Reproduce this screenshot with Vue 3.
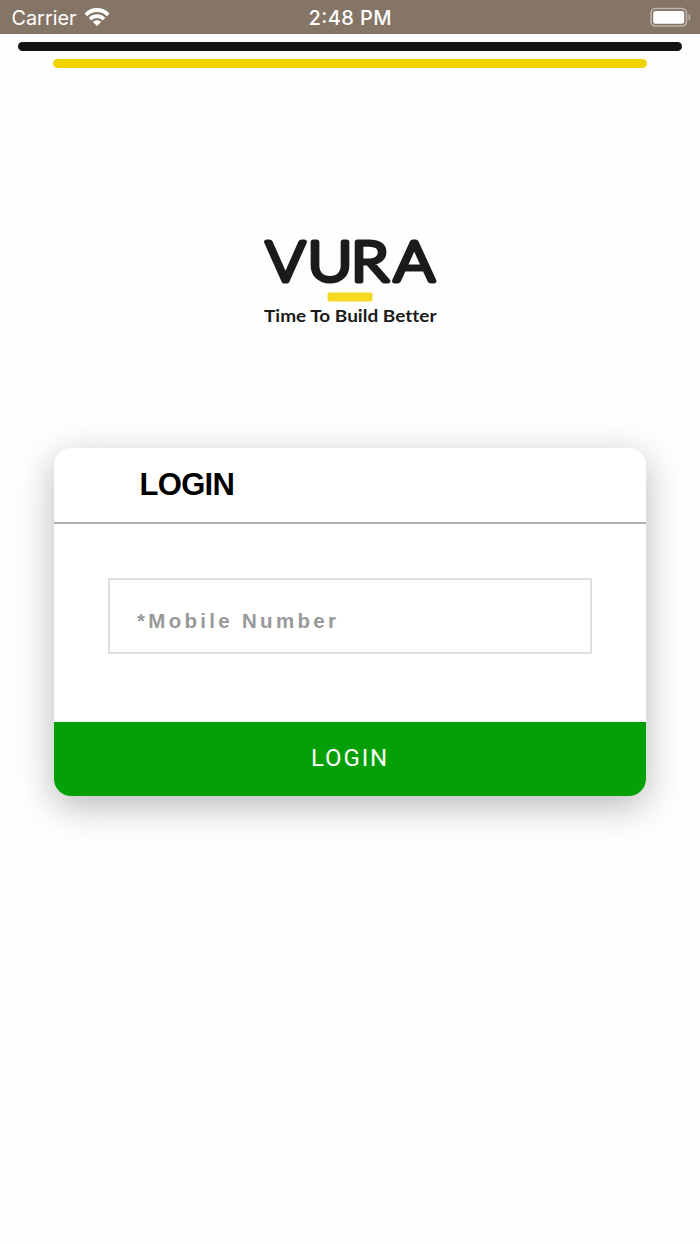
<script setup>
import { ref } from 'vue';

const mobile = ref('');
</script>

<template>
  <div class="screen">
    <header class="status-bar">
      <div class="carrier">
        <svg class="carrier-name" width="66" height="26" viewBox="0 0 66 26">
          <text x="-0.5" y="20.5" textLength="65" lengthAdjust="spacingAndGlyphs">Carrier</text>
        </svg>
        <svg class="wifi" width="26" height="20" viewBox="0 0 26 20">
          <path d="M0.5 6.5C7.5-.8 18.5-.8 25.5 6.5L22.8 9.2C17.4 3.7 8.6 3.7 3.2 9.2Z" />
          <path d="M4.7 10.7C9.3 6.1 16.7 6.1 21.3 10.7L18.6 13.4C15.5 10.3 10.5 10.3 7.4 13.4Z" />
          <path d="M8.9 14.9C11.2 12.7 14.8 12.7 17.1 14.9L13 19Z" />
        </svg>
      </div>
      <svg class="time" width="84" height="26" viewBox="0 0 84 26">
        <text x="0.5" y="20.5" textLength="83" lengthAdjust="spacing">2:48 PM</text>
      </svg>
      <svg class="battery" width="42" height="20" viewBox="0 0 42 20">
        <rect x="1" y="1.5" width="35.5" height="17.500" rx="4.5" fill="none" stroke="#bdb4ac" stroke-width="1.6" />
        <rect x="3.2" y="3.9" width="31" height="12.8" rx="2.2" fill="#fff" />
        <path d="M38.5 7C41 8 41 12.500 38.5 13.500Z" fill="#bdb4ac" />
      </svg>
    </header>

    <div class="line black"></div>
    <div class="line yellow"></div>

    <!-- logo -->
    <svg class="logo" width="180" height="96" viewBox="0 0 180 96">
      <g class="brand">
        <text x="6" y="45.8" textLength="39" lengthAdjust="spacingAndGlyphs">V</text>
        <text x="47.5" y="45.8" textLength="45" lengthAdjust="spacingAndGlyphs">U</text>
        <text x="91" y="45.8" textLength="37.5" lengthAdjust="spacingAndGlyphs">R</text>
        <text x="134" y="45.8" textLength="40.5" lengthAdjust="spacingAndGlyphs">A</text>
      </g>
      <rect x="67.5" y="57.5" width="45" height="9" rx="2" fill="#f5da22" />
      <text class="tagline" x="4" y="87.3" textLength="172.5" lengthAdjust="spacingAndGlyphs">Time To Build Better</text>
    </svg>

    <form class="card" @submit.prevent>
      <h1 class="title">LOGIN</h1>
      <div class="body">
        <input v-model="mobile" class="field" type="tel" placeholder="*Mobile Number" />
      </div>
      <button class="submit" type="submit">LOGIN</button>
    </form>
  </div>
</template>

<style>
body {
  background: #fff;
}
</style>

<style scoped>
.screen {
  display: flex;
  flex-direction: column;
  align-items: center;
  width: 700px;
  height: 1244px;
  overflow: hidden;
  background: #fefefe;
  font-family: "Liberation Sans", Arial, sans-serif;
}

svg {
  overflow: visible;
}

.status-bar {
  display: grid;
  grid-template-columns: 1fr 84px 1fr;
  align-items: center;
  box-sizing: border-box;
  width: 100%;
  height: 34px;
  padding: 0 8px 0 12px;
  background: #857567;
  font-family: Inter, sans-serif;
  font-size: 20px;
  fill: #fff;
}
.carrier {
  display: flex;
  align-items: center;
  gap: 6px;
}
.wifi {
  margin-top: -1px;
}
.time {
  margin-left: -2px;
  font-weight: 500;
}
.battery {
  justify-self: end;
}

.line {
  flex: none;
  height: 9px;
  border-radius: 5px;
}
.black {
  width: 664px;
  margin-top: 8px;
  background: #111413;
}
.yellow {
  width: 594px;
  margin-top: 8px;
  background: #f2d302;
}

.logo {
  flex: none;
  margin-top: 167px;
}
.brand {
  font-family: Lato, sans-serif;
  font-size: 56px;
  font-weight: 300;
  fill: #1b1b19;
  stroke: #1b1b19;
  stroke-width: 5;
  stroke-linejoin: round;
}
.tagline {
  font-family: Lato, sans-serif;
  font-size: 17px;
  font-weight: 700;
  font-variant-ligatures: none;
  fill: #1b1b19;
}

.card {
  display: flex;
  flex-direction: column;
  width: 592px;
  height: 348px;
  margin-top: 117px;
  overflow: hidden;
  border-radius: 17px;
  background: #fff;
  box-shadow: 0 10px 37px rgba(0, 0, 0, 0.28);
}
.title {
  box-sizing: border-box;
  height: 76px;
  margin: 0;
  padding-left: 85.5px;
  border-bottom: 2px solid #b0b0b0;
  font-size: 31px;
  line-height: 74px;
  letter-spacing: -0.7px;
  color: #000;
}
.body {
  flex: 1;
  padding: 54px 54px 0;
}
.field {
  display: block;
  box-sizing: border-box;
  width: 484px;
  height: 76px;
  padding: 10px 27px 0;
  border: 2px solid #dfdfdf;
  border-radius: 0;
  outline: none;
  background: #fff;
  font-family: inherit;
  font-size: 20.5px;
  font-weight: 700;
  letter-spacing: 3.3px;
}
.field::placeholder {
  color: #999;
  opacity: 1;
}
.submit {
  height: 74px;
  padding: 0 0 3px;
  border: 0;
  background: #03a107;
  font-family: Roboto, sans-serif;
  font-size: 24px;
  letter-spacing: 1.9px;
  color: #fff;
}
</style>
